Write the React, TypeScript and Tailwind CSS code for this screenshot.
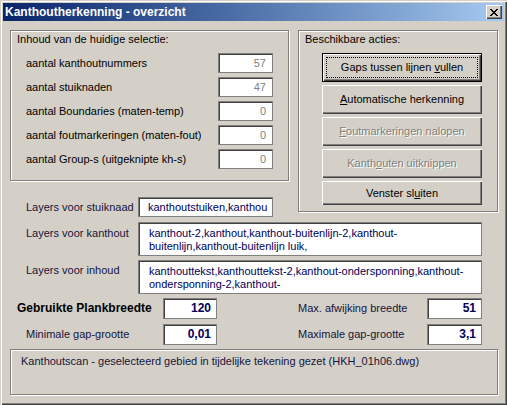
import type { ReactNode } from 'react';

const sunken = 'bg-white border border-[#808080] shadow-[inset_1px_1px_0_#404040]';
const etched = 'border border-[#808080] shadow-[inset_1px_1px_0_#fff,1px_1px_0_#fff]';
const raised = 'shadow-[inset_1px_1px_0_#fff,inset_-1px_-1px_0_#404040,inset_-2px_-2px_0_#808080]';

function ActionButton({
  children,
  isDefault = false,
  disabled = false,
  short = false,
}: {
  children: ReactNode;
  isDefault?: boolean;
  disabled?: boolean;
  short?: boolean;
}) {
  return (
    <div
      className={`relative flex w-[160px] items-center justify-center bg-[#d4d0c8] ${short ? 'h-[24px]' : 'h-[29px]'} ${
        isDefault ? 'border border-black' : ''
      } ${raised} ${disabled ? 'text-[#808080] [text-shadow:1px_1px_0_#fff]' : 'text-black'}`}
    >
      {isDefault && <span className="absolute inset-[3px] border border-dotted border-black" />}
      <span>{children}</span>
    </div>
  );
}

function CountRow({ label, value }: { label: string; value: string }) {
  return (
    <div className="flex h-[20px] items-center pl-[15px] pr-[15px]">
      <span className="flex-1">{label}</span>
      <div className={`${sunken} flex h-[20px] w-[55px] items-center justify-end pr-[6px] text-[#808080]`}>{value}</div>
    </div>
  );
}

function ValueBox({ value, w }: { value: string; w: string }) {
  return (
    <div className={`${sunken} ${w} flex h-[21px] items-center justify-end pr-[5px] text-[12px] font-bold text-[#00005a]`}>
      {value}
    </div>
  );
}

export default function App() {
  return (
    <div className="h-[405px] w-[507px] overflow-hidden bg-[#d4d0c8] p-[3px] font-['Liberation_Sans',Arial,sans-serif] text-[11px] leading-[13px] text-black shadow-[inset_1px_1px_0_#d4d0c8,inset_2px_2px_0_#fff,inset_-1px_-1px_0_#404040,inset_-2px_-2px_0_#808080]">
      {/* title bar */}
      <div className="flex h-[18px] items-center bg-gradient-to-r from-[#0a246a] to-[#a6caf0] pl-[2px] pr-[2px]">
        <span className="flex-1 text-[12px] font-bold text-white">Kanthoutherkenning - overzicht</span>
        <div className={`flex h-[14px] w-[16px] items-center justify-center bg-[#d4d0c8] ${raised}`}>
          <svg width="8" height="7" viewBox="0 0 8 7" shapeRendering="crispEdges">
            <path
              d="M0 0h2v1h-2zM6 0h2v1h-2zM1 1h2v1h-2zM5 1h2v1h-2zM2 2h4v1h-4zM3 3h2v1h-2zM2 4h4v1h-4zM1 5h2v1h-2zM5 5h2v1h-2zM0 6h2v1h-2zM6 6h2v1h-2z"
              fill="#000"
            />
          </svg>
        </div>
      </div>

      <div className="pl-[7px] pt-[9px]">
        <div className="flex items-start">
          <div className="w-[279px]">
            <div className={`${etched} h-[151px] w-[279px]`}>
              <div className="pl-[6px] pt-[2px]">Inhoud van de huidige selectie:</div>
              <div className="mt-[7px] flex flex-col gap-[4px]">
                <CountRow label="aantal kanthoutnummers" value="57" />
                <CountRow label="aantal stuiknaden" value="47" />
                <CountRow label="aantal Boundaries (maten-temp)" value="0" />
                <CountRow label="aantal foutmarkeringen (maten-fout)" value="0" />
                <CountRow label="aantal Group-s (uitgeknipte kh-s)" value="0" />
              </div>
            </div>
            <div className="mt-[16px] flex h-[20px] items-center">
              <span className="w-[128px] pl-[16px] text-[#14143c]">Layers voor stuiknaad</span>
              <div className={`${sunken} flex h-[20px] w-[135px] items-center whitespace-nowrap pl-[9px] text-[#00005a]`}>
                kanthoutstuiken,kanthou
              </div>
            </div>
          </div>

          <div className={`${etched} ml-[9px] h-[182px] w-[200px]`}>
            <div className="pl-[6px] pt-[2px]">Beschikbare acties:</div>
            <div className="mt-[7px] flex flex-col gap-[3px] pl-[23px]">
              <ActionButton isDefault>
                Gaps tussen lijnen <u>v</u>ullen
              </ActionButton>
              <ActionButton>
                <u>A</u>utomatische herkenning
              </ActionButton>
              <ActionButton disabled>
                <u>F</u>outmarkeringen nalopen
              </ActionButton>
              <ActionButton disabled>
                Kanth<u>o</u>uten uitknippen
              </ActionButton>
              <ActionButton short>
                Venster sl<u>u</u>iten
              </ActionButton>
            </div>
          </div>
        </div>

        <div className="mt-[5px] flex items-start">
          <span className="w-[128px] pl-[16px] pt-[5px] text-[#14143c]">Layers voor kanthout</span>
          <div className={`${sunken} h-[34px] w-[344px] overflow-hidden pl-[10px] pt-[4px] text-[#00005a]`}>
            <div className="whitespace-nowrap">kanthout-2,kanthout,kanthout-buitenlijn-2,kanthout-</div>
            <div className="whitespace-nowrap">buitenlijn,kanthout-buitenlijn luik,</div>
          </div>
        </div>

        <div className="mt-[4px] flex items-start">
          <span className="w-[128px] pl-[16px] pt-[4px] text-[#14143c]">Layers voor inhoud</span>
          <div className={`${sunken} h-[34px] w-[344px] overflow-hidden pl-[10px] pt-[4px] text-[#00005a]`}>
            <div className="whitespace-nowrap">kanthouttekst,kanthouttekst-2,kanthout-ondersponning,kanthout-</div>
            <div className="whitespace-nowrap">ondersponning-2,kanthout-</div>
          </div>
        </div>

        <div className="mt-[4px] flex flex-col gap-[5px]">
          <div className="flex h-[21px] items-center">
            <span className="w-[153px] pl-[7px] text-[12px] font-bold">Gebruikte Plankbreedte</span>
            <ValueBox value="120" w="w-[54px]" />
            <span className="ml-[81px] w-[129px] text-[#14143c]">Max. afwijking breedte</span>
            <ValueBox value="51" w="w-[55px]" />
          </div>
          <div className="flex h-[21px] items-center">
            <span className="w-[153px] pl-[16px] text-[#14143c]">Minimale gap-grootte</span>
            <ValueBox value="0,01" w="w-[54px]" />
            <span className="ml-[81px] w-[129px] text-[#14143c]">Maximale gap-grootte</span>
            <ValueBox value="3,1" w="w-[55px]" />
          </div>
        </div>

        <div className={`${etched} mt-[4px] h-[46px] w-[488px] pl-[10px] pt-[5px] text-[#14143c]`}>
          Kanthoutscan - geselecteerd gebied in tijdelijke tekening gezet (HKH_01h06.dwg)
        </div>
      </div>
    </div>
  );
}
